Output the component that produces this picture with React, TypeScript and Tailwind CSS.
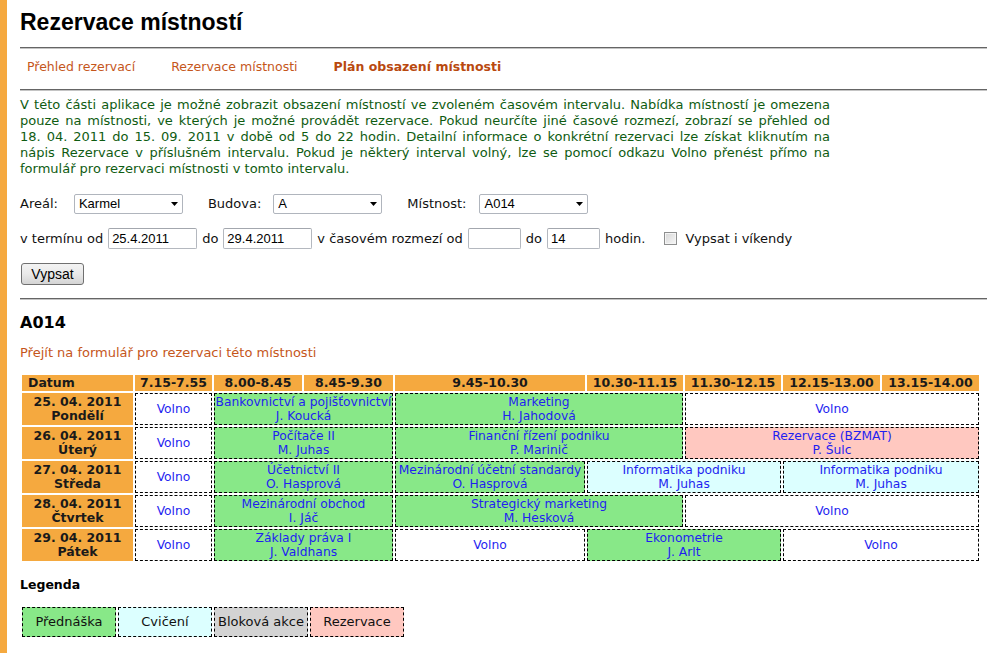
import React from "react";

type Kind = "free" | "lecture" | "exercise" | "reserve";

interface Slot {
  span: number;
  kind: Kind;
  title?: string;
  who?: string;
}

interface Day {
  date: string;
  day: string;
  slots: Slot[];
}

const kindBg: Record<Kind, string> = {
  free: "bg-white",
  lecture: "bg-[#88e888]",
  exercise: "bg-[#dcffff]",
  reserve: "bg-[#ffc8c0]",
};

const times = [
  "7.15-7.55",
  "8.00-8.45",
  "8.45-9.30",
  "9.45-10.30",
  "10.30-11.15",
  "11.30-12.15",
  "12.15-13.00",
  "13.15-14.00",
];

const days: Day[] = [
  {
    date: "25. 04. 2011",
    day: "Pondělí",
    slots: [
      { span: 1, kind: "free" },
      { span: 2, kind: "lecture", title: "Bankovnictví a pojišťovnictví", who: "J. Koucká" },
      { span: 2, kind: "lecture", title: "Marketing", who: "H. Jahodová" },
      { span: 3, kind: "free" },
    ],
  },
  {
    date: "26. 04. 2011",
    day: "Úterý",
    slots: [
      { span: 1, kind: "free" },
      { span: 2, kind: "lecture", title: "Počítače II", who: "M. Juhas" },
      { span: 2, kind: "lecture", title: "Finanční řízení podniku", who: "P. Marinič" },
      { span: 3, kind: "reserve", title: "Rezervace (BZMAT)", who: "P. Šulc" },
    ],
  },
  {
    date: "27. 04. 2011",
    day: "Středa",
    slots: [
      { span: 1, kind: "free" },
      { span: 2, kind: "lecture", title: "Účetnictví II", who: "O. Hasprová" },
      { span: 1, kind: "lecture", title: "Mezinárodní účetní standardy", who: "O. Hasprová" },
      { span: 2, kind: "exercise", title: "Informatika podniku", who: "M. Juhas" },
      { span: 2, kind: "exercise", title: "Informatika podniku", who: "M. Juhas" },
    ],
  },
  {
    date: "28. 04. 2011",
    day: "Čtvrtek",
    slots: [
      { span: 1, kind: "free" },
      { span: 2, kind: "lecture", title: "Mezinárodní obchod", who: "I. Jáč" },
      { span: 2, kind: "lecture", title: "Strategický marketing", who: "M. Hesková" },
      { span: 3, kind: "free" },
    ],
  },
  {
    date: "29. 04. 2011",
    day: "Pátek",
    slots: [
      { span: 1, kind: "free" },
      { span: 2, kind: "lecture", title: "Základy práva I", who: "J. Valdhans" },
      { span: 1, kind: "free" },
      { span: 2, kind: "lecture", title: "Ekonometrie", who: "J. Arlt" },
      { span: 2, kind: "free" },
    ],
  },
];

const Rule = () => (
  <div className="h-[2px] border-t border-b border-t-[#656565] border-b-[#c4c4c4]" />
);

const Select = ({ value }: { value: string }) => (
  <div className="relative w-[109px] h-[20px]">
    <select
      defaultValue={value}
      className="appearance-none w-full h-full rounded-[2px] border border-[#b0b5bd] bg-white pl-[4px] text-[13px] leading-[18px] text-black font-['Liberation_Sans',sans-serif] outline-none"
    >
      <option>{value}</option>
    </select>
    <svg
      className="pointer-events-none absolute right-[5px] top-[8px]"
      width="7"
      height="4"
      viewBox="0 0 7 4"
    >
      <path d="M0 0h7L3.5 4z" fill="#000" />
    </svg>
  </div>
);

const TextBox = ({ value, w }: { value: string; w: string }) => (
  <input
    defaultValue={value}
    className={`${w} h-[21px] rounded-[2px] border border-[#b4b8bf] border-t-[#a3a7ae] bg-white pl-[3px] text-[13px] text-black font-['Liberation_Sans',sans-serif] outline-none`}
  />
);

export default function App() {
  return (
    <div className="flex min-h-screen bg-white font-['DejaVu_Sans',sans-serif] text-[#111]">
      <div className="w-[7px] shrink-0 bg-[#f5a93f]" />

      <div className="flex-1 pl-[13px]">
        {/* HEADER */}
        <h1 className="mt-[8px] text-[23px] leading-[28px] font-bold text-black font-['Liberation_Sans',sans-serif]">
          Rezervace místností
        </h1>

        <div className="mt-[11px]">
          <Rule />
        </div>

        <nav className="flex pt-[10px] pb-[14px] pl-[7px] text-[12.5px] leading-[16px] text-[#c5561b]">
          <span>Přehled rezervací</span>
          <span className="ml-[36px]">Rezervace místnosti</span>
          <span className="ml-[36px] font-bold text-[#b9490f]">Plán obsazení místnosti</span>
        </nav>

        <Rule />

        {/* INTRO */}
        <div className="mt-[6px] w-[810px] text-[13px] leading-[16px] text-[#0f5c12]">
          <p className="text-justify [text-align-last:justify]">
            V této části aplikace je možné zobrazit obsazení místností ve zvoleném časovém intervalu. Nabídka místností je omezena
          </p>
          <p className="text-justify [text-align-last:justify]">
            pouze na místnosti, ve kterých je možné provádět rezervace. Pokud neurčíte jiné časové rozmezí, zobrazí se přehled od
          </p>
          <p className="text-justify [text-align-last:justify]">
            18. 04. 2011 do 15. 09. 2011 v době od 5 do 22 hodin. Detailní informace o konkrétní rezervaci lze získat kliknutím na
          </p>
          <p className="text-justify [text-align-last:justify]">
            nápis Rezervace v příslušném intervalu. Pokud je některý interval volný, lze se pomocí odkazu Volno přenést přímo na
          </p>
          <p>formulář pro rezervaci místnosti v tomto intervalu.</p>
        </div>

        {/* FILTER */}
        <div className="mt-[17px] flex h-[20px] items-center text-[13px]">
          <span>Areál:</span>
          <div className="ml-[16px]">
            <Select value="Karmel" />
          </div>
          <span className="ml-[25px]">Budova:</span>
          <div className="ml-[12px]">
            <Select value="A" />
          </div>
          <span className="ml-[25px]">Místnost:</span>
          <div className="ml-[13px]">
            <Select value="A014" />
          </div>
        </div>

        <div className="mt-[14px] flex h-[21px] items-center gap-[5px] text-[13px]">
          <span>v termínu od</span>
          <TextBox value="25.4.2011" w="w-[89px]" />
          <span>do</span>
          <TextBox value="29.4.2011" w="w-[89px]" />
          <span>v časovém rozmezí od</span>
          <TextBox value="" w="w-[53px]" />
          <span>do</span>
          <TextBox value="14" w="w-[53px]" />
          <span>hodin.</span>
          <span className="ml-[14px] h-[13px] w-[13px] border border-[#8e8f8f] bg-linear-to-br from-[#d6d6d6] to-[#f7f7f7] shadow-[inset_0_0_0_1px_#f4f4f4]" />
          <span className="ml-[3px]">Vypsat i víkendy</span>
        </div>

        <button className="mt-[14px] ml-px h-[22px] w-[63px] rounded-[3px] border border-[#707070] bg-linear-to-b from-[#f3f3f3] via-[#e9e9e9] to-[#d4d4d4] text-[14px] leading-[20px] text-black font-['Liberation_Sans',sans-serif]">
          Vypsat
        </button>

        <div className="mt-[12px]">
          <Rule />
        </div>

        {/* ROOM */}
        <h2 className="mt-[13px] text-[16px] leading-[20px] font-bold text-black">A014</h2>

        <p className="mt-[12px] text-[13px] leading-[16px] text-[#c5561b]">
          Přejít na formulář pro rezervaci této místnosti
        </p>

        <table className="mt-[12px] w-[961px] table-fixed border-separate border-spacing-[2px] text-[12.3px]">
          <colgroup>
            <col className="w-[111px]" />
            <col className="w-[77px]" />
            <col className="w-[88px]" />
            <col className="w-[89px]" />
            <col className="w-[190px]" />
            <col className="w-[96px]" />
            <col className="w-[96px]" />
            <col className="w-[97px]" />
            <col className="w-[97px]" />
          </colgroup>
          <thead>
            <tr>
              <th className="h-[16px] bg-[#f5a93f] p-0 pl-[6px] text-left text-[12.5px] leading-[16px] font-bold text-[#1a1a1a]">
                Datum
              </th>
              {times.map((t) => (
                <th
                  key={t}
                  className="h-[16px] bg-[#f5a93f] p-0 text-center text-[12.5px] leading-[16px] font-bold text-[#1a1a1a] whitespace-nowrap"
                >
                  {t}
                </th>
              ))}
            </tr>
          </thead>
          <tbody>
            {days.map((d) => (
              <tr key={d.date}>
                <td className="h-[32px] bg-[#f5a93f] p-0 text-center text-[12.5px] leading-[14px] font-bold text-[#1a1a1a]">
                  <div>{d.date}</div>
                  <div>{d.day}</div>
                </td>
                {d.slots.map((s, i) => (
                  <td
                    key={i}
                    colSpan={s.span}
                    className={`h-[32px] border border-dashed border-black p-0 text-center align-middle leading-[14px] whitespace-nowrap text-[#1f1ff0] ${kindBg[s.kind]}`}
                  >
                    {s.title ? (
                      <>
                        <div>{s.title}</div>
                        <div>{s.who}</div>
                      </>
                    ) : (
                      "Volno"
                    )}
                  </td>
                ))}
              </tr>
            ))}
          </tbody>
        </table>

        {/* LEGEND */}
        <h3 className="mt-[14px] text-[12.5px] leading-[16px] font-bold text-black">Legenda</h3>

        <div className="mt-[14px] ml-[2px] flex gap-[2px] text-[13px] text-[#111]">
          <div className="flex h-[30px] w-[94px] items-center justify-center border border-dashed border-black bg-[#88e888]">
            Přednáška
          </div>
          <div className="flex h-[30px] w-[94px] items-center justify-center border border-dashed border-black bg-[#dcffff]">
            Cvičení
          </div>
          <div className="flex h-[30px] w-[94px] items-center justify-center border border-dashed border-black bg-[#d3d3d3]">
            Bloková akce
          </div>
          <div className="flex h-[30px] w-[94px] items-center justify-center border border-dashed border-black bg-[#ffc8c0]">
            Rezervace
          </div>
        </div>
      </div>
    </div>
  );
}
